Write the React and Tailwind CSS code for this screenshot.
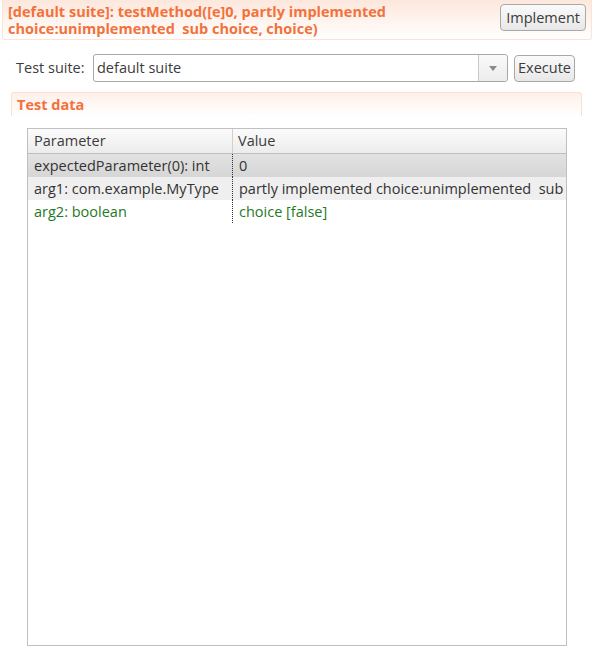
import { useState } from "react"

const rows = [
  { param: "expectedParameter(0): int", value: "0", bg: "bg-gradient-to-b from-[#e2e2e2] to-[#d6d6d6]", color: "text-[#333]" },
  { param: "arg1: com.example.MyType", value: "partly implemented choice:unimplemented  sub choice, choice", bg: "bg-[#efefef]", color: "text-[#333]" },
  { param: "arg2: boolean", value: "choice [false]", bg: "bg-white", color: "text-[#1f7a1f]" },
]

export default function App() {
  const [suite] = useState("default suite")

  return (
    <div className="w-[594px] h-[650px] bg-white overflow-hidden text-[#3c3c3c]" style={{ fontFamily: '"Open Sans", "DejaVu Sans", sans-serif' }}>
      {/* title bar */}
      <div className="mx-[2px] h-[40px] flex items-start justify-between rounded-b-[3px] border-x border-b border-[#fbe3d8] bg-gradient-to-b from-[#fde7dc] to-white">
        <div className="pl-[5px] pt-[3px] text-[14.5px] leading-[17px] font-bold text-[#f3713b]">
          <div className="whitespace-pre">[default suite]: testMethod([e]0, partly implemented</div>
          <div className="whitespace-pre">choice:unimplemented  sub choice, choice)</div>
        </div>
        <button className="mt-[4px] mr-[5px] h-[27px] px-[5px] rounded-[4px] border border-[#a8a8a8] bg-gradient-to-b from-[#fafafa] to-[#e8e8e8] text-[14.5px] text-[#3c3c3c]">
          Implement
        </button>
      </div>

      {/* suite row */}
      <div className="flex items-center mt-[14px] pl-[16px] h-[28px]">
        <span className="text-[14.5px] w-[77px]">Test suite:</span>
        <div className="flex h-[28px] w-[415px] rounded-[3px] border border-[#a8a8a8] bg-white">
          <div className="flex-1 pl-[3px] flex items-center text-[14.5px]">{suite}</div>
          <div className="w-[29px] border-l border-[#c8c8c8] rounded-r-[3px] bg-gradient-to-b from-[#fafafa] to-[#ececec] flex items-center justify-center">
            <svg width="8" height="5" viewBox="0 0 8 5"><path d="M0 0h8L4 5z" fill="#8a8a8a" /></svg>
          </div>
        </div>
        <button className="ml-[6px] h-[27px] px-[3px] rounded-[4px] border border-[#a8a8a8] bg-gradient-to-b from-[#fafafa] to-[#e8e8e8] text-[14.5px] text-[#3c3c3c]">
          Execute
        </button>
      </div>

      {/* test data section */}
      <div className="ml-[11px] mr-[12px] mt-[10px] h-[24px] rounded-t-[3px] border-x border-t border-[#fbe0d2] bg-gradient-to-b from-[#fef0e9] to-white pl-[5px] flex items-center text-[14.5px] font-bold text-[#f3713b]">
        Test data
      </div>

      {/* table */}
      <div className="ml-[27px] mt-[12px] w-[540px] h-[518px] border border-[#c0c0c0] overflow-hidden bg-white">
        <div className="flex h-[25px] border-b border-[#bdbdbd] bg-gradient-to-b from-[#fbfbfb] to-[#ececec] text-[14.5px]">
          <div className="w-[205px] border-r border-[#cfcfcf] pl-[6px] flex items-center">Parameter</div>
          <div className="flex-1 pl-[5px] flex items-center">Value</div>
        </div>
        {rows.map((r) => (
          <div key={r.param} className={`flex h-[23px] text-[14.5px] whitespace-pre ${r.bg} ${r.color}`}>
            <div className="w-[205px] shrink-0 pl-[6px] flex items-center border-r border-dotted border-[#333]">{r.param}</div>
            <div className="pl-[6px] flex items-center">{r.value}</div>
          </div>
        ))}
      </div>
    </div>
  )
}
